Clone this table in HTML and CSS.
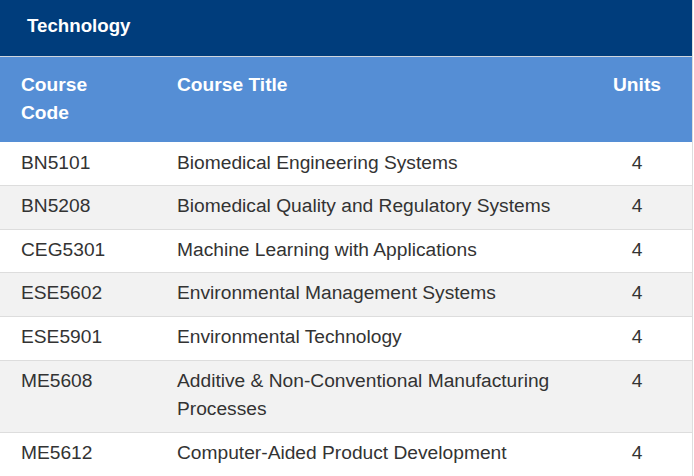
FILE: index.html
```html
<!DOCTYPE html>
<html>
<head>
<meta charset="utf-8">
<link rel="stylesheet" href="styles.css">
</head>
<body>
<div class="panel">
  <div class="panel-title">Technology</div>
  <table class="courses">
    <thead>
      <tr>
        <th class="col-code">Course Code</th>
        <th class="col-title">Course Title</th>
        <th class="col-units">Units</th>
      </tr>
    </thead>
    <tbody>
      <tr><td>BN5101</td><td>Biomedical Engineering Systems</td><td class="units">4</td></tr>
      <tr><td>BN5208</td><td>Biomedical Quality and Regulatory Systems</td><td class="units">4</td></tr>
      <tr><td>CEG5301</td><td>Machine Learning with Applications</td><td class="units">4</td></tr>
      <tr><td>ESE5602</td><td>Environmental Management Systems</td><td class="units">4</td></tr>
      <tr><td>ESE5901</td><td>Environmental Technology</td><td class="units">4</td></tr>
      <tr><td>ME5608</td><td>Additive &amp; Non-Conventional Manufacturing Processes</td><td class="units">4</td></tr>
      <tr><td>ME5612</td><td>Computer-Aided Product Development</td><td class="units">4</td></tr>
    </tbody>
  </table>
</div>
</body>
</html>
```
FILE: styles.css
```css
html, body {
  margin: 0;
  padding: 0;
  background: #ffffff;
}
body {
  font-family: "Liberation Sans", Arial, sans-serif;
  color: #333333;
  overflow: hidden;
}
.panel {
  width: 692px;
  border-right: 1px solid #dddddd;
}
.panel-title {
  background: #003d7c;
  color: #ffffff;
  font-weight: bold;
  font-size: 18.7px;
  line-height: 28px;
  padding: 12px 27px 16px;
  border-bottom: 1px solid #cfd6de;
}
.courses {
  width: 100%;
  border-collapse: collapse;
  table-layout: fixed;
  font-size: 19.2px;
  line-height: 28.8px;
}
.courses th {
  background: #558ed5;
  color: #ffffff;
  font-weight: bold;
  text-align: left;
  vertical-align: top;
  padding: 13.5px 21px 13.5px;
}
.courses td {
  padding: 6px 21px 7.8px;
  vertical-align: top;
  border-top: 1px solid #dddddd;
}
.courses tbody tr:first-child td {
  border-top-color: #ffffff;
}
.courses tbody tr:nth-child(even) td {
  background: #f2f2f2;
}
.col-code { width: 114px; }
.col-units { width: 68px; }
.courses th.col-units,
.courses td.units {
  text-align: center;
}
```
